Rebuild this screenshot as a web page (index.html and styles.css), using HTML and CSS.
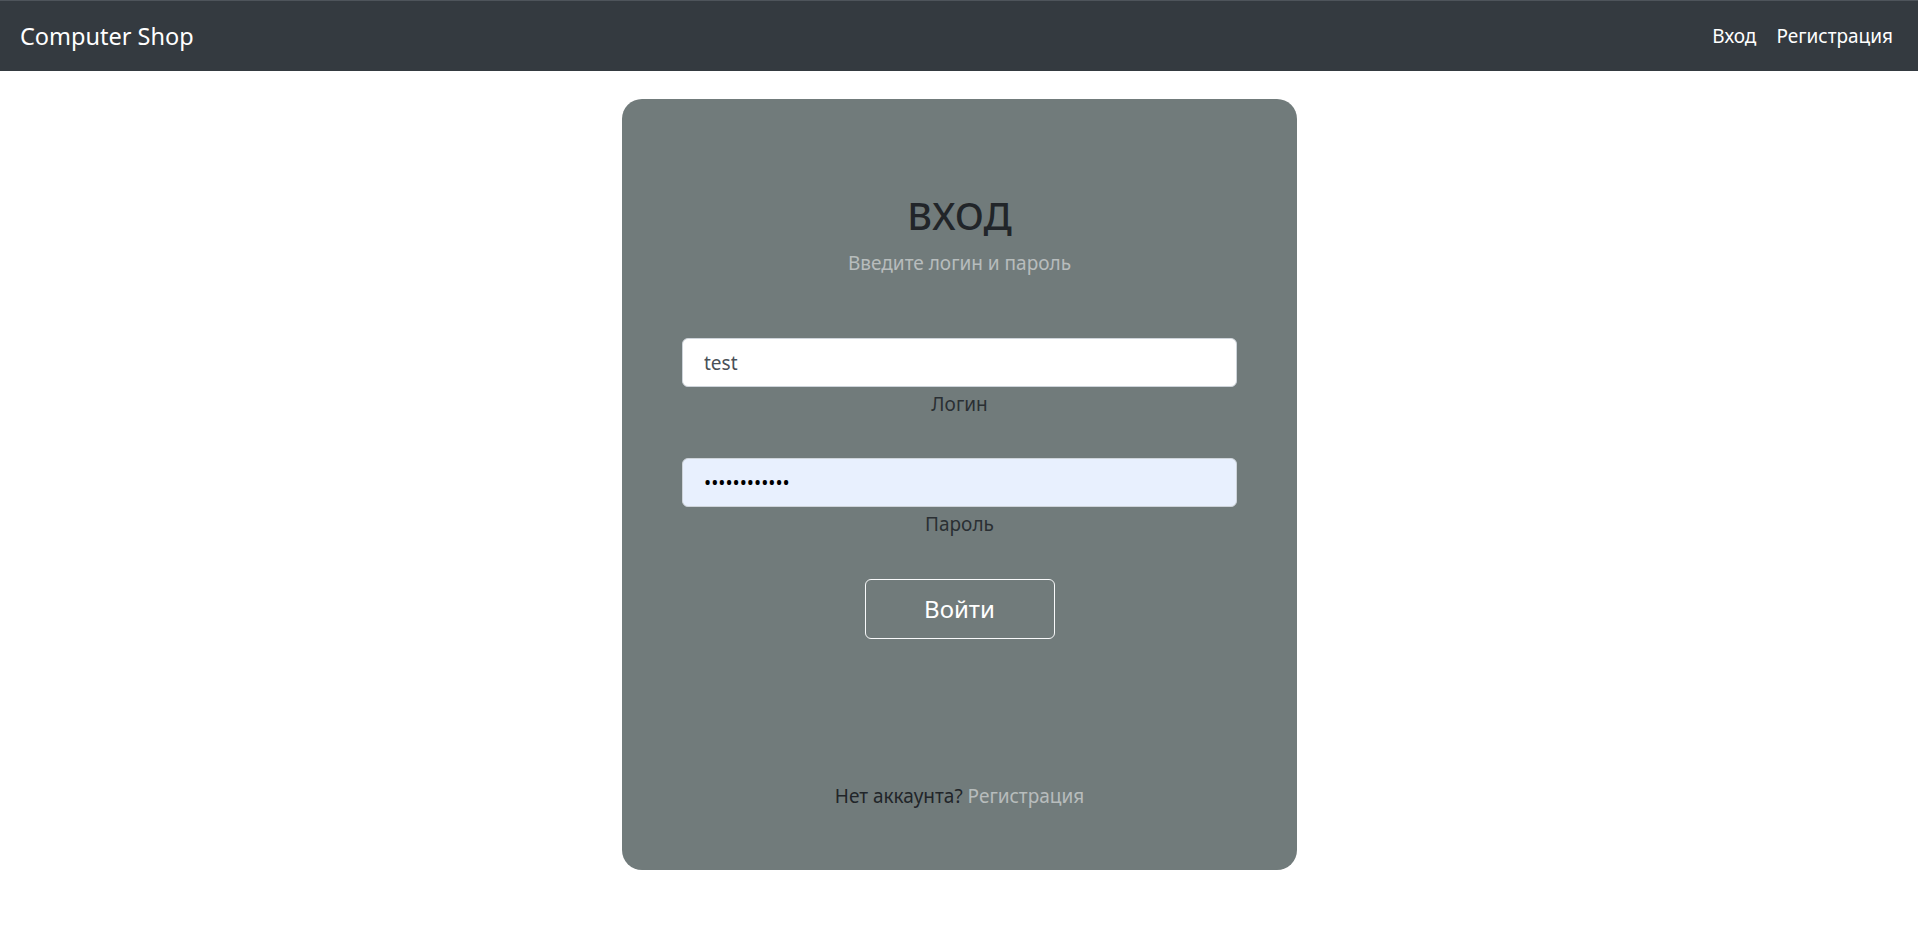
FILE: index.html
```html
<!DOCTYPE html>
<html lang="ru">
<head>
<meta charset="utf-8">
<title>Computer Shop</title>
<link rel="stylesheet" href="styles.css">
</head>
<body>
<nav class="navbar">
  <a class="brand" href="#">Computer Shop</a>
  <div class="nav-links">
    <a class="nav-link" href="#">Вход</a>
    <a class="nav-link" href="#">Регистрация</a>
  </div>
</nav>
<main class="main">
  <section class="card">
    <h2 class="title">ВХОД</h2>
    <p class="subtitle">Введите логин и пароль</p>
    <div class="field">
      <input class="input" type="text" value="test">
      <label class="label">Логин</label>
    </div>
    <div class="field">
      <input class="input autofill" type="password" value="123456789012">
      <label class="label">Пароль</label>
    </div>
    <button class="btn" type="button">Войти</button>
    <p class="footer">Нет аккаунта? <a class="link" href="#">Регистрация</a></p>
  </section>
</main>
</body>
</html>
```

FILE: styles.css
```css
* { box-sizing: border-box; }
html, body { margin: 0; padding: 0; }
body {
  font-family: "Noto Sans", "Open Sans", sans-serif;
  background: #ffffff;
  color: #212529;
}
.navbar {
  height: 71px;
  background: #343a40;
  border-top: 1px solid #4e545b;
  display: flex;
  align-items: center;
  justify-content: space-between;
  padding: 0 15px 0 20px;
}
.brand {
  color: #ffffff;
  text-decoration: none;
  font-size: 23.5px;
  line-height: 30px;
}
.nav-links { display: flex; }
.nav-link {
  color: #ffffff;
  text-decoration: none;
  font-size: 19px;
  line-height: 30px;
  padding: 0 10px;
}
.main {
  display: flex;
  justify-content: center;
  padding-top: 28px;
  padding-left: 1px;
}
.card {
  width: 675px;
  height: 771px;
  background: #717b7b;
  border-radius: 20px;
  padding: 92px 60px 59px;
  display: flex;
  flex-direction: column;
  align-items: center;
}
.title {
  margin: 0;
  font-size: 38px;
  line-height: 48px;
  font-weight: 500;
  color: #212529;
}
.subtitle {
  margin: 9px 0 0;
  font-size: 19px;
  line-height: 30px;
  color: rgba(255, 255, 255, 0.5);
}
.field {
  width: 100%;
  display: flex;
  flex-direction: column;
  align-items: center;
  margin-top: 60px;
}
.field + .field { margin-top: 39px; }
.input {
  width: 100%;
  height: 49px;
  border: 1px solid #ced4da;
  border-radius: 6px;
  background: #ffffff;
  padding: 0 21px;
  font-family: inherit;
  font-size: 19px;
  color: #495057;
  outline: none;
}
.input.autofill {
  background: #e8f0fe;
  color: #000000;
}
.label {
  padding-top: 2px;
  font-size: 19px;
  line-height: 30px;
  color: #2a2f33;
}
.btn {
  margin-top: 40px;
  width: 190px;
  height: 60px;
  background: transparent;
  border: 1px solid #f8f9fa;
  border-radius: 6px;
  color: #ffffff;
  font-family: inherit;
  font-size: 24px;
  line-height: 36px;
  cursor: pointer;
}
.footer {
  margin: auto 0 0;
  font-size: 19px;
  line-height: 30px;
  color: #212529;
}
.link {
  color: rgba(255, 255, 255, 0.5);
  text-decoration: none;
}
```
